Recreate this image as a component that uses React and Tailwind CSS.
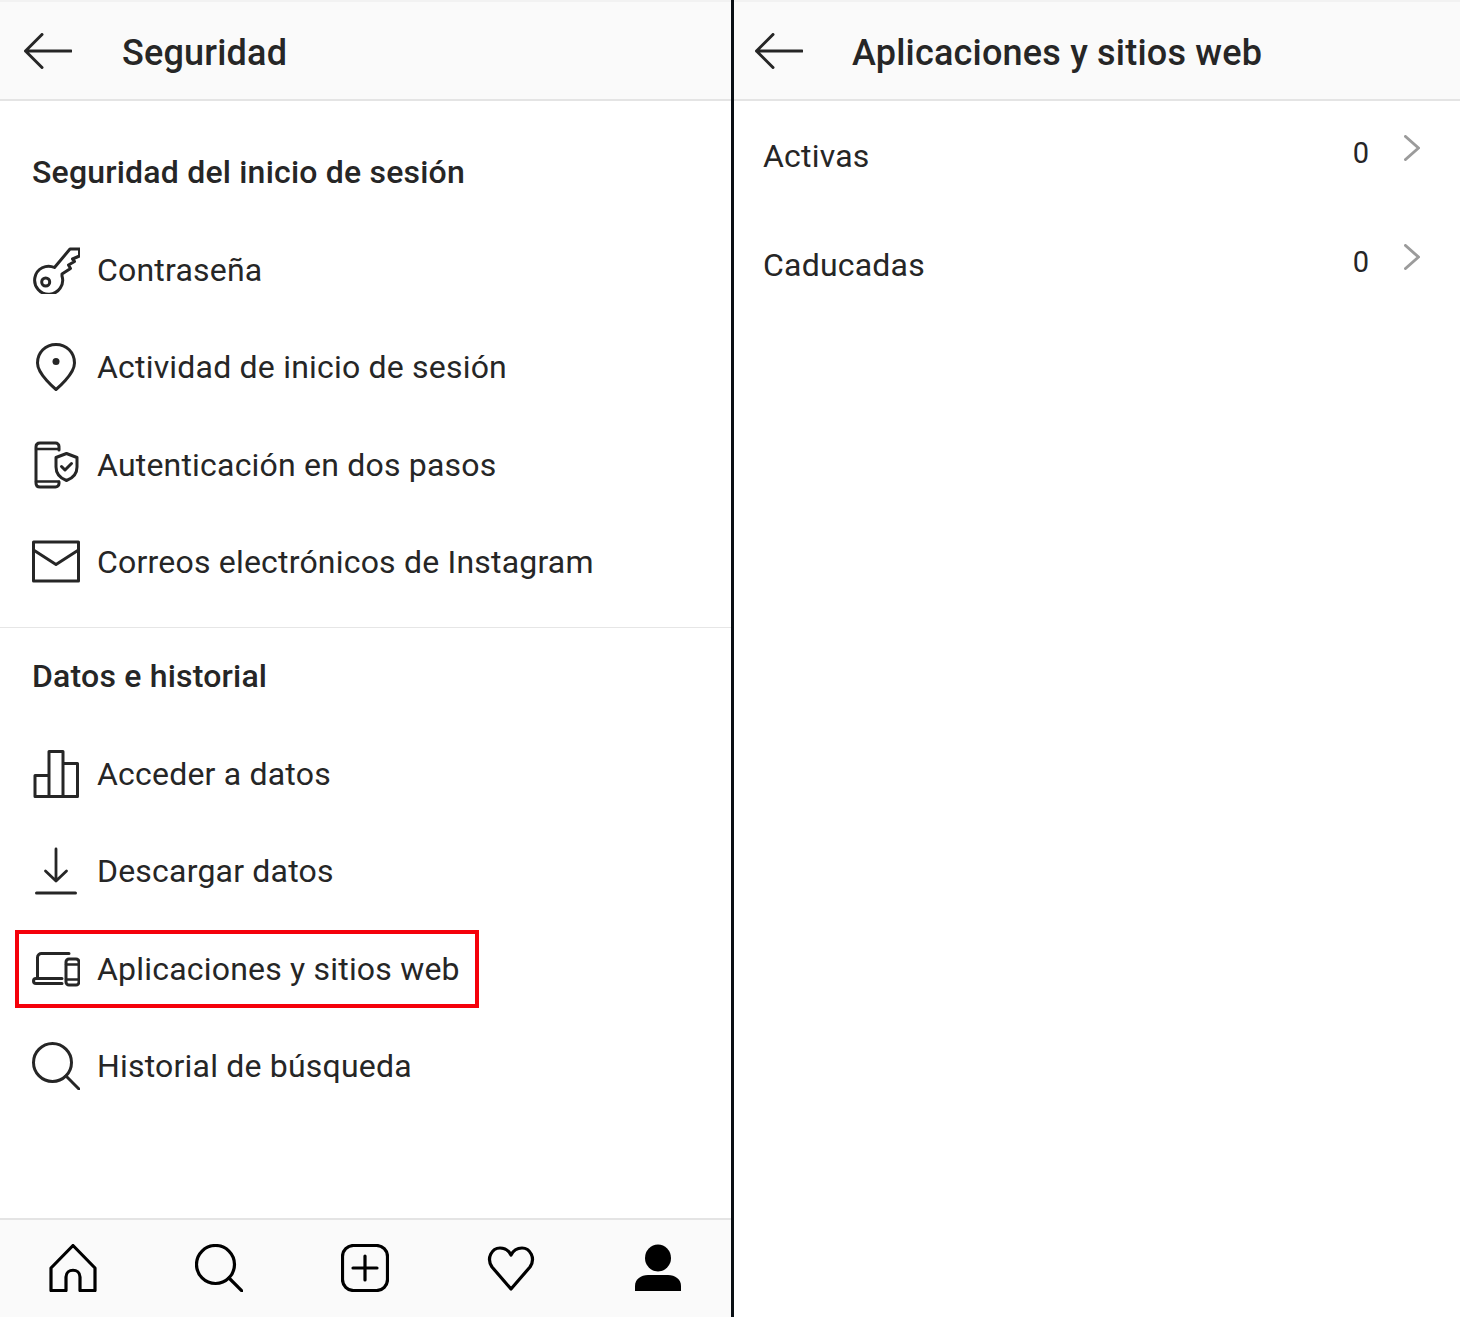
import React from 'react';

const Icon = ({ children, size = 48, sw = 3 }) => (
  <svg width={size} height={size} viewBox="0 0 48 48" fill="none" stroke="#262626" strokeWidth={sw} strokeLinecap="round" strokeLinejoin="round" className="shrink-0">
    {children}
  </svg>
);

const Back = () => (
  <svg width="48" height="36" viewBox="0 0 48 36" fill="none" stroke="#262626" strokeWidth="3" strokeLinecap="round" strokeLinejoin="round" className="shrink-0">
    <path d="M1.500 18H47M18 1.500L1.500 18L18 34.500" />
  </svg>
);

const KeyIcon = () => (
  <Icon>
    <path d="M30 30A14 14 0 1 1 22.500 21.500L38 3H47.500V10L40.500 13L42.500 15.500L36.500 19L38.500 22.500L30 28Z" />
    <circle cx="13.700" cy="36" r="4" />
  </Icon>
);

const PinIcon = () => (
  <Icon>
    <path d="M24 46.500C24 46.500 5.500 31.500 5.500 20C5.500 9.500 13.500 1.500 24 1.500C34.500 1.500 42.500 9.500 42.500 20C42.500 31.500 24 46.500 24 46.500Z" />
    <circle cx="24" cy="18.500" r="3.500" fill="#262626" stroke="none" />
  </Icon>
);

const PhoneShieldIcon = () => (
  <Icon>
    <path d="M27 9V5.500C27 3.500 25.500 2 23.500 2H8C5.500 2 4 3.500 4 6V42C4 44.500 5.500 46 8 46H23.500C25.500 46 27 44.500 27 42.500V41" />
    <path d="M4 8H27M4 40.500H27" strokeWidth="2.400" />
    <path d="M34.500 12.500L24 16.500V26C24 33 29 37.500 34.500 39.500C40 37.500 45 33 45 26V16.500Z" />
    <path d="M29.500 25.500L33 29L39.500 22.500" />
  </Icon>
);

const MailIcon = () => (
  <Icon sw="3">
    <rect x="1.500" y="4" width="45" height="39" />
    <path d="M1.500 12L24 26.500L46.500 12" />
  </Icon>
);

const BarsIcon = () => (
  <Icon sw="3">
    <path d="M3 46.500V25.500H17V46.500ZM17 46.500V1.500H31V46.500ZM31 46.500V13.500H45.500V46.500Z" />
  </Icon>
);

const DownloadIcon = () => (
  <Icon sw="2.800">
    <path d="M24 2V34M13.500 24L24 34L34.500 24" />
    <path d="M4.500 46H43.500" strokeWidth="3" />
  </Icon>
);

const DevicesIcon = () => (
  <Icon>
    <path d="M37 8.500H9.500C7.500 8.500 5.500 10 5.500 12.500V33" />
    <path d="M30 38.500H4C2.500 38.500 1.500 37.500 1.500 36C1.500 34 2.500 33.500 4 33.500H30" />
    <rect x="34" y="14" width="13" height="26" rx="3" />
    <path d="M34 19.500H47M34 34.500H47" strokeWidth="2.400" />
  </Icon>
);

const SearchIcon = ({ stroke = '#262626', sw = 3 }) => (
  <svg width="48" height="48" viewBox="0 0 48 48" fill="none" stroke={stroke} strokeWidth={sw} strokeLinecap="round" className="shrink-0">
    <circle cx="20.500" cy="20.500" r="19" />
    <path d="M34 34L47 47" />
  </svg>
);

const HomeIcon = () => (
  <svg width="48" height="48" viewBox="0 0 48 48" fill="none" stroke="#000" strokeWidth="3.200" strokeLinejoin="round">
    <path d="M24 1.500L2 24V46.500H17V33C17 24 31 24 31 33V46.500H46V24Z" />
  </svg>
);

const PlusIcon = () => (
  <svg width="48" height="48" viewBox="0 0 48 48" fill="none" stroke="#000" strokeWidth="3.200" strokeLinecap="round">
    <rect x="1.500" y="1.500" width="45" height="45" rx="11" />
    <path d="M24 12V36M12 24H36" />
  </svg>
);

const HeartIcon = () => (
  <svg width="48" height="48" viewBox="0 0 48 48" fill="none" stroke="#000" strokeWidth="3.200" strokeLinejoin="round">
    <path d="M24 45L5 23C-1 14 5 4 13 4C18 4 22 7 24 11C26 7 30 4 35 4C43 4 49 14 43 23Z" />
  </svg>
);

const UserIcon = () => (
  <svg width="48" height="48" viewBox="0 0 48 48" fill="#000">
    <ellipse cx="25" cy="14" rx="13" ry="13.500" />
    <path d="M2 47V42C2 35 8 31 15 31H35C42 31 48 35 48 42V47Z" />
  </svg>
);

const Chevron = () => (
  <svg width="16" height="26" viewBox="0 0 16 26" fill="none" stroke="#9b9b9b" strokeWidth="3" strokeLinecap="round" strokeLinejoin="round">
    <path d="M1.500 1.500L14.500 13L1.500 24.500" />
  </svg>
);

const Header = ({ title, left, gap }) => (
  <div className={`flex h-[101px] items-center border-t-2 border-b-2 border-t-[#f2f2f2] border-b-[#e4e4e4] bg-[#fafafa] ${left}`}>
    <Back />
    <h1 className={`mt-[4px] text-[36px] font-medium tracking-[0.2px] text-[#262626] ${gap}`}>{title}</h1>
  </div>
);

const Row = ({ icon, label, boxed }) => (
  <div className="relative flex h-[97.5px] items-center pl-[32px]">
    {icon}
    <span className="ml-[17px] text-[32px] tracking-[0.2px] text-[#262626]">{label}</span>
    {boxed && <div className="absolute left-[15px] top-[10px] h-[78px] w-[464px] border-4 border-[#f5000a]" />}
  </div>
);

const AppRow = ({ label }) => (
  <div className="flex h-[109px] items-center pl-[29px] pr-[40px]">
    <span className="flex-1 text-[32px] tracking-[0.2px] text-[#262626]">{label}</span>
    <span className="mb-[4px] text-[29px] text-[#262626]">0</span>
    <span className="mb-[16px] ml-[35px]"><Chevron /></span>
  </div>
);

export default function App() {
  return (
    <div className="flex h-[1317px] w-[1460px] overflow-hidden bg-white font-['Roboto',sans-serif]">
      <div className="flex w-[731px] flex-col">
        <Header title="Seguridad" left="pl-[24px]" gap="ml-[50px]" />
        <h2 className="flex h-[120px] items-center pl-[32px] pt-[22px] text-[32px] font-medium tracking-[0.2px] text-[#262626]">Seguridad del inicio de sesión</h2>
        <Row icon={<KeyIcon />} label="Contraseña" />
        <Row icon={<PinIcon />} label="Actividad de inicio de sesión" />
        <Row icon={<PhoneShieldIcon />} label="Autenticación en dos pasos" />
        <Row icon={<MailIcon />} label="Correos electrónicos de Instagram" />
        <div className="mt-[16px] h-px bg-[#e6e6e6]" />
        <h2 className="flex h-[97px] items-center pb-[2px] pl-[32px] text-[32px] font-medium tracking-[0.2px] text-[#262626]">Datos e historial</h2>
        <Row icon={<BarsIcon />} label="Acceder a datos" />
        <Row icon={<DownloadIcon />} label="Descargar datos" />
        <Row icon={<DevicesIcon />} label="Aplicaciones y sitios web" boxed />
        <Row icon={<SearchIcon />} label="Historial de búsqueda" />
        <div className="flex-1" />
        <nav className="flex h-[99px] items-center border-t-2 border-t-[#e4e4e4] bg-[#fafafa] pb-[1px] pr-[1px]">
          <div className="flex flex-1 justify-center"><HomeIcon /></div>
          <div className="flex flex-1 justify-center"><SearchIcon stroke="#000" sw="3.200" /></div>
          <div className="flex flex-1 justify-center"><PlusIcon /></div>
          <div className="flex flex-1 justify-center"><HeartIcon /></div>
          <div className="flex flex-1 justify-center"><UserIcon /></div>
        </nav>
      </div>
      <div className="w-[3px] bg-[#0a0f14]" />
      <div className="flex flex-1 flex-col">
        <Header title="Aplicaciones y sitios web" left="pl-[21px]" gap="ml-[49px]" />
        <AppRow label="Activas" />
        <AppRow label="Caducadas" />
      </div>
    </div>
  );
}
